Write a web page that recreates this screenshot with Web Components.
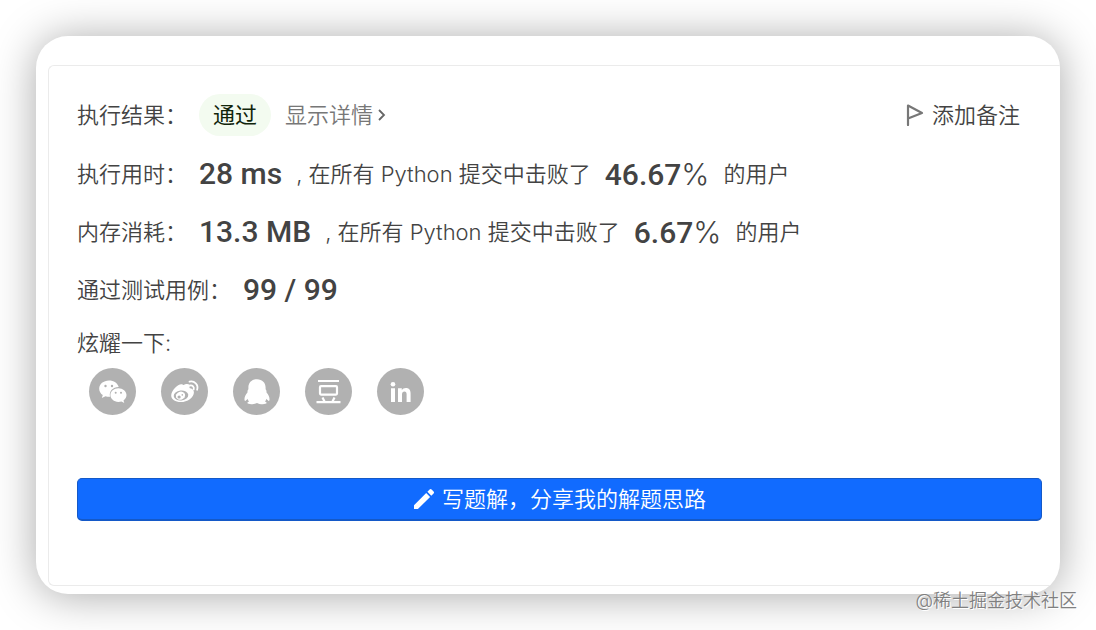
<!DOCTYPE html>
<html lang="zh-CN">
<head>
<meta charset="utf-8">
<meta name="viewport" content="width=device-width, initial-scale=1">
<title>执行结果</title>
<style>
  body { margin: 0; padding: 36px; background: #fff; color: #434343;
    font: 350 22px/32px Inter, "Noto Sans CJK SC", sans-serif; }
</style>
</head>
<body>
<result-card>
  <result-row label="执行结果：" size="tall">
    <status-pill>通过</status-pill>
    <detail-link>显示详情</detail-link>
    <note-button slot="end">添加备注</note-button>
  </result-row>
  <result-row label="执行用时："><metric-value>28 ms</metric-value><span>, 在所有 Python 提交中击败了</span><metric-value unit="%">46.67</metric-value><span>的用户</span></result-row>
  <result-row label="内存消耗："><metric-value>13.3 MB</metric-value><span>, 在所有 Python 提交中击败了</span><metric-value unit="%">6.67</metric-value><span>的用户</span></result-row>
  <result-row label="通过测试用例："><metric-value>99 / 99</metric-value></result-row>
  <share-bar label="炫耀一下:"></share-bar>
  <write-button>写题解，分享我的解题思路</write-button>
</result-card>
<water-mark>@稀土掘金技术社区</water-mark>

<script>
const define = (name, html, setup) => {
  const template = document.createElement('template');
  template.innerHTML = html;
  customElements.define(name, class extends HTMLElement {
    constructor() {
      super();
      this.attachShadow({ mode: 'open' }).append(template.content.cloneNode(true));
    }
    connectedCallback() { if (setup) setup(this, this.shadowRoot); }
  });
};

define('result-card', `
<style>
  :host { display: flow-root; overflow: hidden; border-radius: 32px; background: #fff;
    box-shadow: 0 2px 44px rgba(0,0,0,.34); }
  section { margin: 29px 0 8px 12px; padding: 28px 18px 64px 28px;
    border: 1px solid #ebebeb; border-right: 0; border-radius: 6px 0 0 6px; }
</style>
<section><slot></slot></section>`);

define('result-row', `
<style>
  :host { display: flex; align-items: center; min-height: 58px; white-space: nowrap; }
  :host([size=tall]) { min-height: 42px; margin-bottom: 9px; }
  .label { margin-right: 12px; }
  .content { display: flex; align-items: center; gap: 14px; flex: 1; }
  ::slotted([slot=end]) { margin-right: 22px; }
</style>
<span class="label"></span><div class="content"><slot></slot></div><slot name="end"></slot>`,
(el, root) => { root.querySelector('.label').textContent = el.getAttribute('label'); });

define('status-pill', `
<style>
  :host { display: block; padding: 5px 14px; border-radius: 21px; background: #f3fbf0; color: #10250b; font-weight: 400; }
</style><slot></slot>`);

define('detail-link', `
<style>
  :host { display: block; }
  a { display: flex; align-items: center; gap: 4px; color: #777; text-decoration: none; }
</style>
<a href="#detail"><slot></slot><svg width="9" height="12" viewBox="0 0 9 12" fill="none" stroke="#666" stroke-width="1.800" aria-hidden="true"><path d="M2 1l5 5-5 5"/></svg></a>`);

define('note-button', `
<style>
  :host { display: block; }
  button { display: flex; align-items: center; gap: 8px; padding: 0; border: 0; background: none; color: inherit; font: inherit; }
</style>
<button type="button"><svg width="18" height="22" viewBox="0 0 18 22" fill="none" stroke="#777" stroke-width="2.200" stroke-linejoin="round" stroke-linecap="round" aria-hidden="true"><path d="M2 21V1.500L16 9 2 14.500"/></svg><slot></slot></button>`);

define('metric-value', `
<style>
  :host { display: flex; align-items: baseline; font: 500 30px/40px Roboto, sans-serif; white-space: nowrap; }
  .unit { font-family: Inter, sans-serif; font-weight: 300; }
</style><slot></slot><span class="unit"></span>`,
(el, root) => { root.querySelector('.unit').textContent = el.getAttribute('unit') || ''; });

const shareIcons = [
  ['微信', `<path fill="#fff" d="M20 12.500c-5.500 0-9.800 3.600-9.800 8.200 0 2.600 1.400 4.900 3.600 6.400l-1 3 3.700-1.900c1.500.4 3 .6 4.600.5-1.500-5.500 3-9.800 8.600-9.700-.9-3.800-5-6.500-9.700-6.500z"/><path fill="#fff" d="M29.400 20.300c-4.500 0-8 3-8 6.800s3.500 6.800 8 6.800c1.100 0 2.100-.2 3.100-.5l2.800 1.500-.8-2.500c1.900-1.300 3-3.100 3-5.300 0-3.800-3.600-6.800-8.100-6.800z"/><g fill="#b1b1b1"><circle cx="16.500" cy="18" r="1.200"/><circle cx="23" cy="18" r="1.200"/><circle cx="26.700" cy="24.700" r="1"/><circle cx="32" cy="24.700" r="1"/></g>`],
  ['微博', `<path fill="#fff" d="M22.300 17c1.700-.9 4.700-1.700 5.900-.4.900 1 .5 2.400.2 3.500 2 .5 4.500 1.500 4.500 4.300 0 4.900-6.500 9.700-13.200 9.700-5.300 0-9.500-2.500-9.500-6.500 0-5.500 7.500-12.300 10.800-11.300 1 .3 1.300 1 1.300.7z"/><ellipse cx="20" cy="27.500" rx="7.300" ry="5" transform="rotate(-6 20 27.500)" fill="#b1b1b1"/><ellipse cx="19.500" cy="27.700" rx="4.700" ry="4" transform="rotate(-20 19.500 27.700)" fill="#fff"/><circle cx="18.100" cy="29" r="1.600" fill="#b1b1b1"/><circle cx="21.300" cy="26.900" r=".8" fill="#b1b1b1"/><path d="M28.500 13.700c4.800-1.300 9.300 3 7.600 8M29 17.500c2.500-.6 4.400 1.500 3.700 3.900" fill="none" stroke="#fff" stroke-width="1.800" stroke-linecap="round"/>`],
  ['QQ', `<path fill="#fff" d="M24 11.300c-5.400 0-8.600 3.600-8.600 8.200v1.800c-.8.800-1.100 1.900-.8 2.900-2.400 2.700-3.700 6.300-2.900 8.400.4.800 1.700-.2 2.700-1.900.4 1 .9 1.900 1.700 2.700-1.200.4-1.800 1-1.700 1.600.3 1.600 7.300 1.500 9.600-.1 2.300 1.600 9.300 1.700 9.600.1.100-.6-.5-1.200-1.700-1.600.8-.8 1.300-1.700 1.700-2.700 1 1.700 2.300 2.700 2.700 1.900.8-2.100-.5-5.700-2.900-8.400.3-1 0-2.100-.8-2.900v-1.800c0-4.600-3.200-8.200-8.600-8.200z"/>`],
  ['豆瓣', `<path d="M13 13h21M11.500 34.200h24M17.500 29.500l2 4M29.500 29.500l-2 4" fill="none" stroke="#fff" stroke-width="2.200"/><rect x="15" y="18.200" width="17" height="8.400" rx="1" fill="none" stroke="#fff" stroke-width="2.200"/>`],
  ['LinkedIn', `<circle cx="16" cy="16.300" r="2.300" fill="#fff"/><path fill="#fff" d="M14 20.300h4V34h-4zM21 20.300h3.800v1.900c.8-1.400 2.300-2.300 4.100-2.300 3.300 0 4.700 2.200 4.700 5.500V34h-4v-7.700c0-1.800-.7-2.800-2.100-2.800-1.600 0-2.500 1.100-2.500 2.900V34h-4z"/>`]
];

define('share-bar', `
<style>
  :host { display: block; margin-bottom: 63px; }
  p { margin: 8px 0 9px; }
  .icons { display: flex; gap: 25px; padding-left: 12px; }
  button { width: 47px; height: 47px; padding: 0; border: 0; border-radius: 50%; background: #b1b1b1; }
  svg { display: block; }
</style>
<p></p>
<div class="icons">${shareIcons.map(([name, art]) => `<button type="button" aria-label="${name}"><svg width="47" height="47" viewBox="0 0 47 47" aria-hidden="true">${art}</svg></button>`).join('')}</div>`,
(el, root) => { root.querySelector('p').textContent = el.getAttribute('label'); });

define('write-button', `
<style>
  :host { display: block; }
  button { display: flex; align-items: center; justify-content: center; gap: 7px; width: 100%; height: 43px; padding: 0;
    border: 1px solid #1459c8; border-bottom-width: 2px; border-radius: 5px; background: #116bff; color: #fff; font: inherit; }
</style>
<button type="button"><svg width="22" height="22" viewBox="0 0 22 22" fill="#fff" aria-hidden="true"><path d="M1 17.200L13.200 5l3.900 3.900L4.900 21H1zM14.400 3.800l2.200-2.200q1-1 2 0l2 2q1 1 0 2l-2.300 2.200z"/></svg><slot></slot></button>`);

define('water-mark', `
<style>
  :host { position: absolute; right: 19px; top: 588px; font-size: 18px; line-height: 26px; color: #808080;
    text-shadow: 1px 1px 0 #fff; white-space: nowrap; }
</style><slot></slot>`);
</script>
</body>
</html>
